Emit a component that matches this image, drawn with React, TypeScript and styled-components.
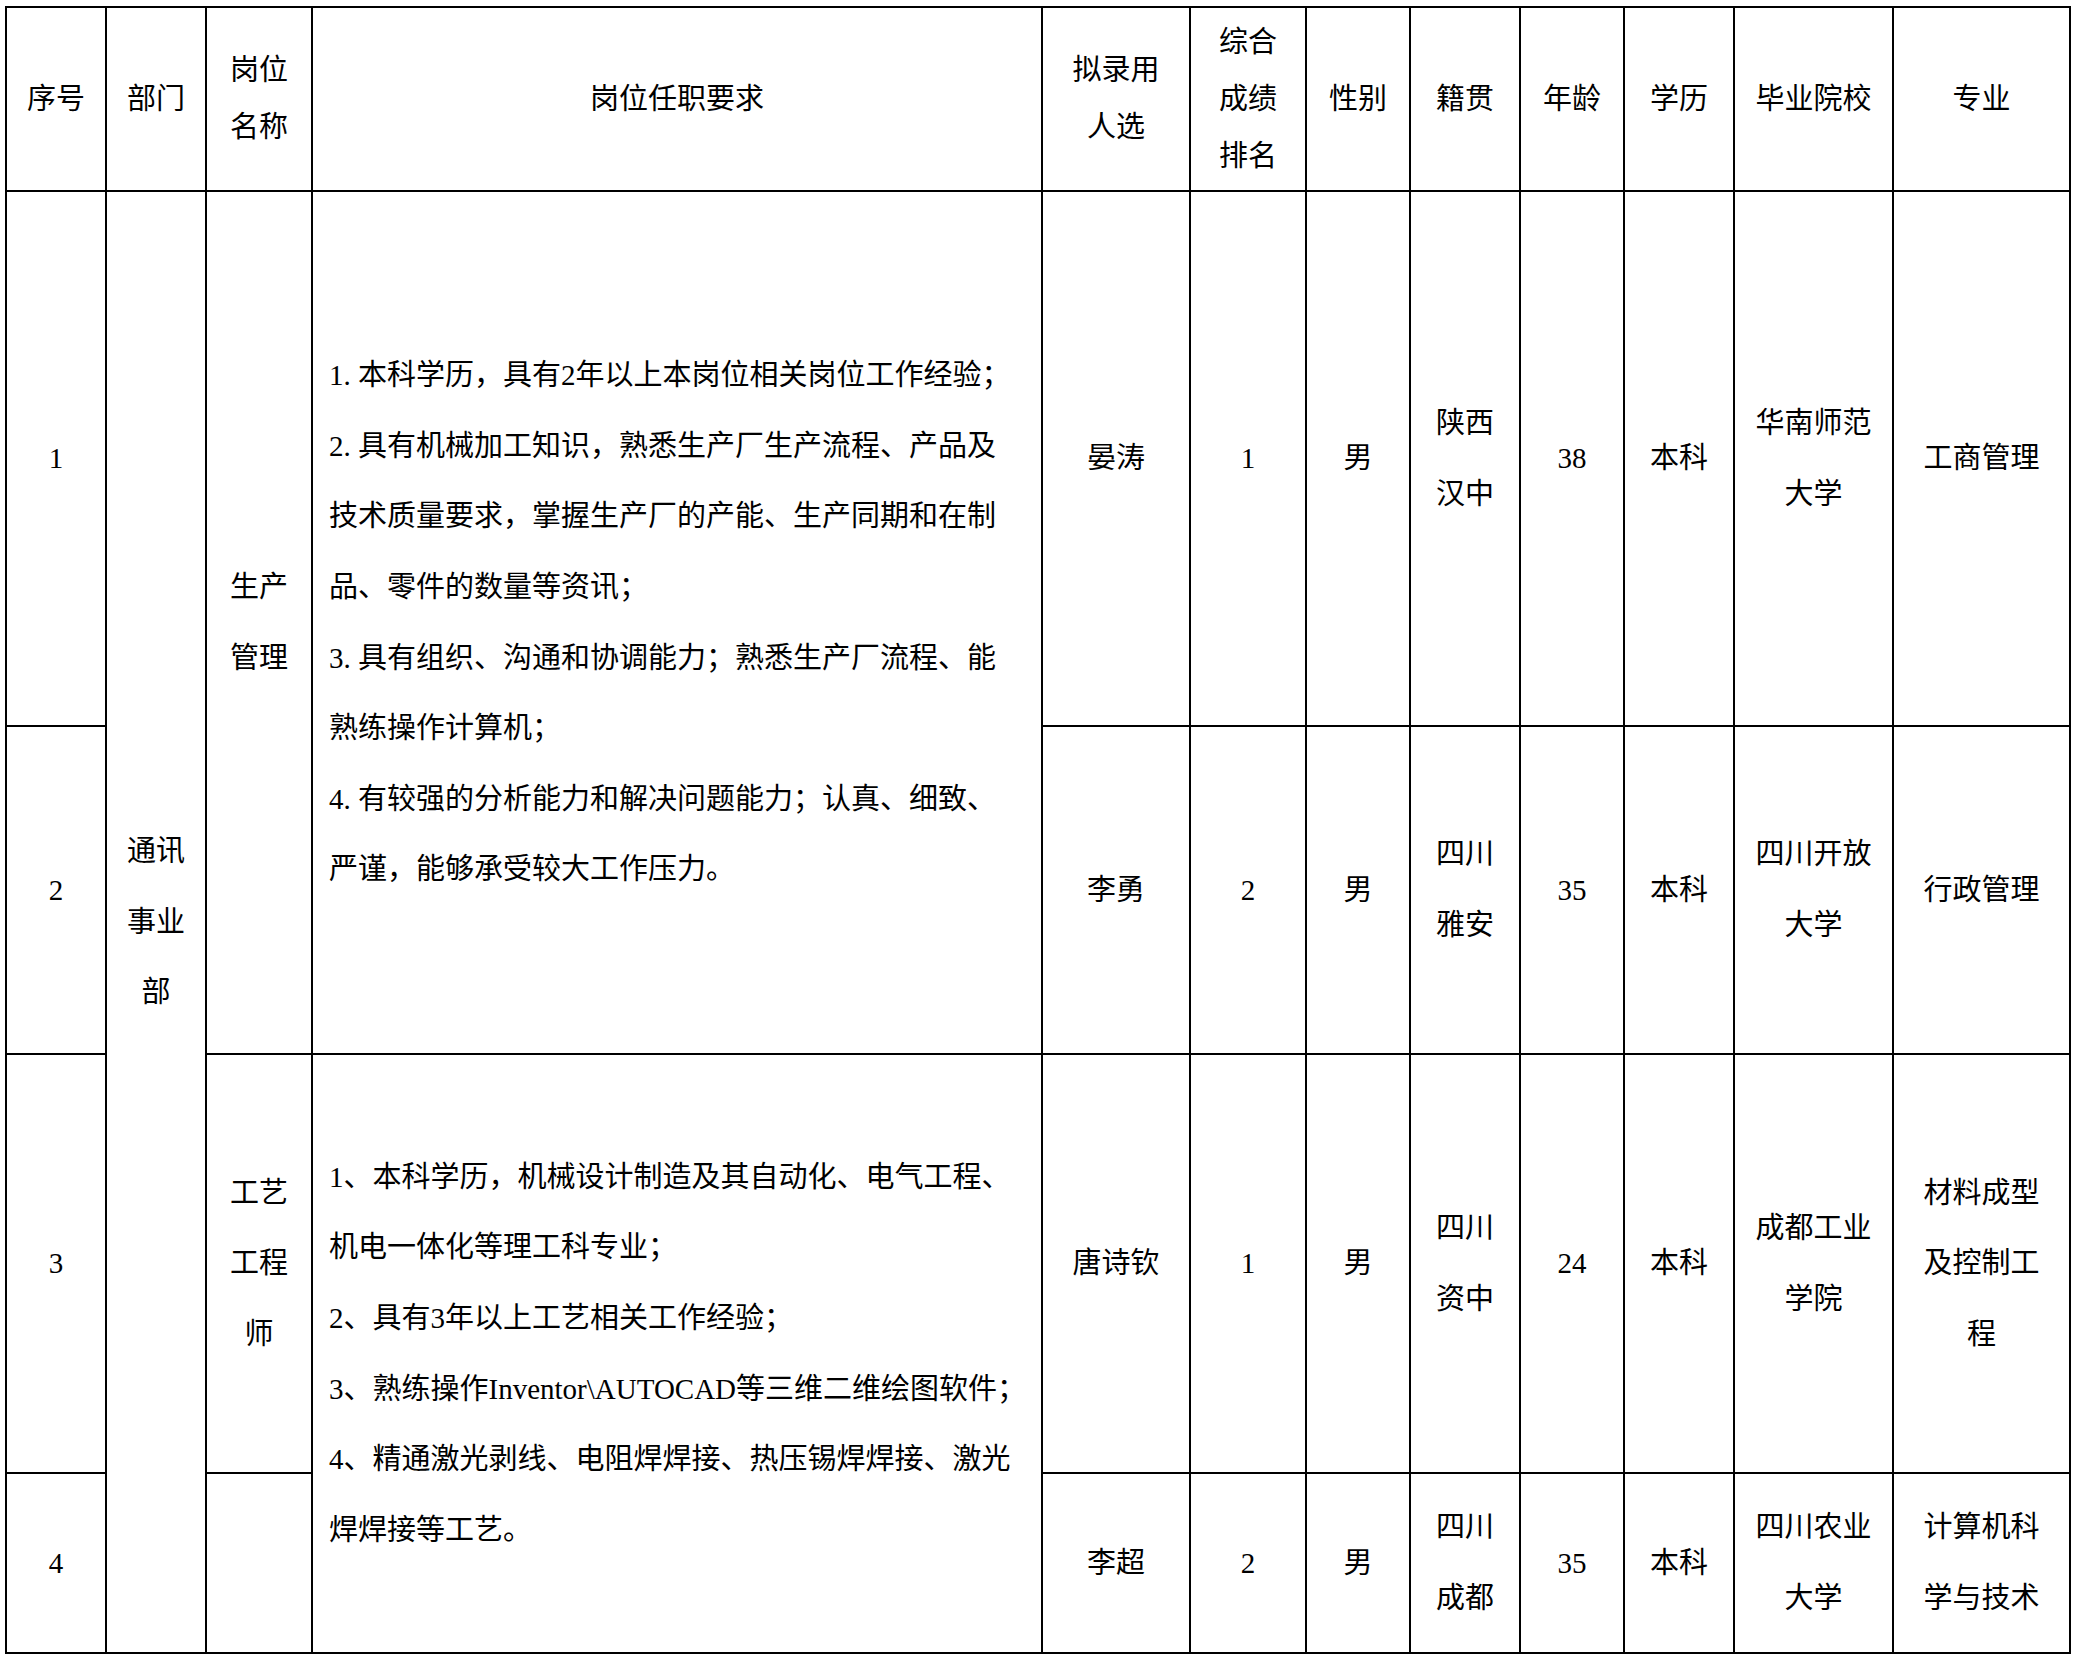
import React from 'react';
import styled, { createGlobalStyle } from 'styled-components';

const GlobalStyle = createGlobalStyle`
    html, body {
        margin: 0;
        padding: 0;
        background: #ffffff;
    }
`;

const Page = styled.div`
    padding: 6px 0 0 5px;
    font-family: 'Liberation Serif', 'Noto Sans CJK SC', serif;
    color: #000;
`;

const Table = styled.table`
    border-collapse: collapse;
    table-layout: fixed;
    width: 2064px;
    font-size: 29px;
`;

const Col = styled.col<{ $w: number }>`
    width: ${(p) => p.$w}px;
`;

const Row = styled.tr<{ $h: number }>`
    height: ${(p) => p.$h}px;
`;

const HeadCell = styled.th`
    border: 2px solid #000;
    padding: 0 4px;
    font-weight: normal;
    text-align: center;
    vertical-align: middle;
    line-height: 57px;
`;

const Cell = styled.td`
    border: 2px solid #000;
    padding: 0 4px;
    text-align: center;
    vertical-align: middle;
    line-height: 70.6px;
`;

const ReqCell = styled(Cell)`
    text-align: left;
    padding: 0 0 0 16px;
`;

const ReqLine = styled.div`
    white-space: nowrap;
`;

// "1." 这种编号在原文里占一个字宽
const ItemNo = styled.span`
    display: inline-block;
    width: 29px;
`;

interface Person {
    no: string;
    name: string;
    rank: string;
    sex: string;
    origin: string[];
    age: string;
    edu: string;
    school: string[];
    major: string[];
}

interface ReqText {
    no?: string;
    text: string;
}

const people: Person[] = [
    { no: '1', name: '晏涛', rank: '1', sex: '男', origin: ['陕西', '汉中'], age: '38', edu: '本科', school: ['华南师范', '大学'], major: ['工商管理'] },
    { no: '2', name: '李勇', rank: '2', sex: '男', origin: ['四川', '雅安'], age: '35', edu: '本科', school: ['四川开放', '大学'], major: ['行政管理'] },
    { no: '3', name: '唐诗钦', rank: '1', sex: '男', origin: ['四川', '资中'], age: '24', edu: '本科', school: ['成都工业', '学院'], major: ['材料成型', '及控制工', '程'] },
    { no: '4', name: '李超', rank: '2', sex: '男', origin: ['四川', '成都'], age: '35', edu: '本科', school: ['四川农业', '大学'], major: ['计算机科', '学与技术'] },
];

const reqProduction: ReqText[] = [
    { no: '1.', text: '本科学历，具有2年以上本岗位相关岗位工作经验；' },
    { no: '2.', text: '具有机械加工知识，熟悉生产厂生产流程、产品及' },
    { text: '技术质量要求，掌握生产厂的产能、生产同期和在制' },
    { text: '品、零件的数量等资讯；' },
    { no: '3.', text: '具有组织、沟通和协调能力；熟悉生产厂流程、能' },
    { text: '熟练操作计算机；' },
    { no: '4.', text: '有较强的分析能力和解决问题能力；认真、细致、' },
    { text: '严谨，能够承受较大工作压力。' },
];

const reqProcess: ReqText[] = [
    { text: '1、本科学历，机械设计制造及其自动化、电气工程、' },
    { text: '机电一体化等理工科专业；' },
    { text: '2、具有3年以上工艺相关工作经验；' },
    { text: '3、熟练操作Inventor\\AUTOCAD等三维二维绘图软件；' },
    { text: '4、精通激光剥线、电阻焊焊接、热压锡焊焊接、激光' },
    { text: '焊焊接等工艺。' },
];

const colWidths = [100, 100, 106, 730, 148, 116, 104, 110, 104, 110, 159, 177];
const rowHeights = [535, 328, 419, 180];

const Lines = ({ items }: { items: string[] }) => (
    <>
        {items.map((t, i) => (
            <React.Fragment key={i}>
                {i > 0 && <br />}
                {t}
            </React.Fragment>
        ))}
    </>
);

const Requirements = ({ items }: { items: ReqText[] }) => (
    <>
        {items.map((r, i) => (
            <ReqLine key={i}>
                {r.no && <ItemNo>{r.no}</ItemNo>}
                {r.text}
            </ReqLine>
        ))}
    </>
);

const PersonCells = ({ p }: { p: Person }) => (
    <>
        <Cell>{p.name}</Cell>
        <Cell>{p.rank}</Cell>
        <Cell>{p.sex}</Cell>
        <Cell>
            <Lines items={p.origin} />
        </Cell>
        <Cell>{p.age}</Cell>
        <Cell>{p.edu}</Cell>
        <Cell>
            <Lines items={p.school} />
        </Cell>
        <Cell>
            <Lines items={p.major} />
        </Cell>
    </>
);

const App = () => {
    return (
        <Page>
            <GlobalStyle />
            <Table>
                <colgroup>
                    {colWidths.map((w, i) => (
                        <Col key={i} $w={w} />
                    ))}
                </colgroup>
                <thead>
                    <Row $h={184}>
                        <HeadCell>序号</HeadCell>
                        <HeadCell>部门</HeadCell>
                        <HeadCell>
                            <Lines items={['岗位', '名称']} />
                        </HeadCell>
                        <HeadCell>岗位任职要求</HeadCell>
                        <HeadCell>
                            <Lines items={['拟录用', '人选']} />
                        </HeadCell>
                        <HeadCell>
                            <Lines items={['综合', '成绩', '排名']} />
                        </HeadCell>
                        <HeadCell>性别</HeadCell>
                        <HeadCell>籍贯</HeadCell>
                        <HeadCell>年龄</HeadCell>
                        <HeadCell>学历</HeadCell>
                        <HeadCell>毕业院校</HeadCell>
                        <HeadCell>专业</HeadCell>
                    </Row>
                </thead>
                <tbody>
                    <Row $h={rowHeights[0]}>
                        <Cell>{people[0].no}</Cell>
                        <Cell rowSpan={4}>
                            <Lines items={['通讯', '事业', '部']} />
                        </Cell>
                        <Cell rowSpan={2}>
                            <Lines items={['生产', '管理']} />
                        </Cell>
                        <ReqCell rowSpan={2}>
                            <Requirements items={reqProduction} />
                        </ReqCell>
                        <PersonCells p={people[0]} />
                    </Row>
                    <Row $h={rowHeights[1]}>
                        <Cell>{people[1].no}</Cell>
                        <PersonCells p={people[1]} />
                    </Row>
                    <Row $h={rowHeights[2]}>
                        <Cell>{people[2].no}</Cell>
                        <Cell>
                            <Lines items={['工艺', '工程', '师']} />
                        </Cell>
                        <ReqCell rowSpan={2}>
                            <Requirements items={reqProcess} />
                        </ReqCell>
                        <PersonCells p={people[2]} />
                    </Row>
                    <Row $h={rowHeights[3]}>
                        <Cell>{people[3].no}</Cell>
                        <Cell />
                        <PersonCells p={people[3]} />
                    </Row>
                </tbody>
            </Table>
        </Page>
    );
};

export default App;
